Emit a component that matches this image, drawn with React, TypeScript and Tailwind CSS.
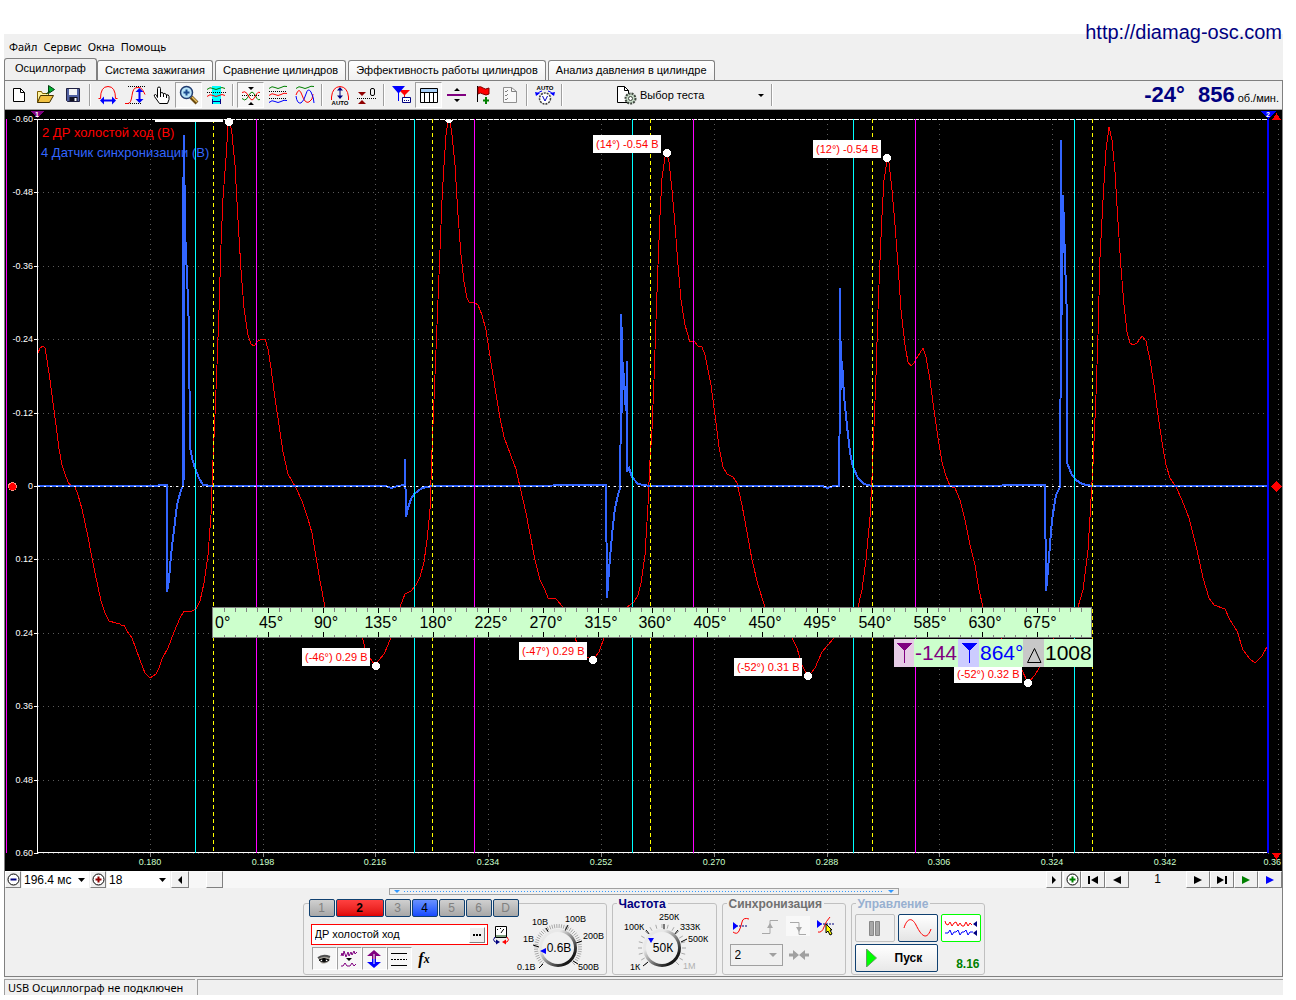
import type { ReactNode } from "react";
import { clsx } from "clsx";

type Point = [number, number];

const SANS = "font-['Liberation_Sans',sans-serif]";

const TABS = [
  "Осциллограф",
  "Система зажигания",
  "Сравнение цилиндров",
  "Эффективность работы цилиндров",
  "Анализ давления в цилиндре",
];

const GRID_Y: [number, string][] = [
  [119, "-0.60"],
  [192, "-0.48"],
  [266, "-0.36"],
  [339, "-0.24"],
  [413, "-0.12"],
  [486, "0"],
  [559, "0.12"],
  [633, "0.24"],
  [706, "0.36"],
  [780, "0.48"],
  [853, "0.60"],
];

const GRID_X: [number, string][] = [
  [150, "0.180"],
  [263, "0.198"],
  [375, "0.216"],
  [488, "0.234"],
  [601, "0.252"],
  [714, "0.270"],
  [827, "0.288"],
  [939, "0.306"],
  [1052, "0.324"],
  [1165, "0.342"],
];

const CYAN_LINES = [195, 414, 632, 853, 1074];
const MAGENTA_LINES = [256, 474, 693, 915];
const YELLOW_LINES = [213, 432, 650, 872, 1092];

const PRESSURE: Point[] = [
  [38, 353], [40, 348], [43, 346], [45, 348], [47, 360], [50, 380], [53, 403], [56, 425], [59, 449], [62, 465],
  [65, 474], [68, 482], [71, 486], [75, 487], [78, 495], [82, 509], [85, 523], [88, 537], [92, 558], [95, 573],
  [98, 587], [101, 601], [105, 613], [109, 621], [112, 621], [113, 623], [115, 622], [117, 624], [119, 623], [121, 625],
  [124, 625], [127, 631], [132, 638], [136, 649], [140, 660], [145, 673], [148, 676], [150, 678], [156, 674], [159, 668],
  [162, 659], [168, 648], [174, 632], [180, 618], [184, 611], [190, 612], [196, 609], [200, 601], [204, 583], [208, 555],
  [211, 515], [213, 460], [215, 415], [217, 365], [219, 310], [221, 245], [223, 198], [226, 158], [228, 126], [230, 122],
  [232, 134], [235, 165], [238, 220], [241, 270], [244, 308], [246, 322], [248, 335], [251, 344], [254, 346], [258, 341],
  [262, 339], [265, 339], [268, 349], [271, 368], [275, 398], [279, 425], [283, 452], [288, 474], [292, 481], [296, 488],
  [302, 501], [308, 519], [312, 533], [316, 557], [320, 581], [325, 607], [333, 626], [362, 636], [365, 648], [369, 657],
  [375, 665], [384, 654], [388, 645], [391, 637], [400, 607], [405, 594], [411, 591], [416, 585], [420, 577], [424, 562],
  [427, 540], [430, 510], [432, 450], [434, 400], [436, 350], [438, 300], [440, 250], [442, 200], [444, 165], [446, 135],
  [448, 122], [450, 121], [452, 135], [455, 165], [458, 215], [461, 255], [464, 282], [467, 298], [469, 302], [475, 303],
  [478, 305], [482, 315], [486, 330], [489, 350], [493, 375], [497, 400], [500, 418], [504, 437], [511, 456], [516, 469],
  [520, 487], [523, 500], [526, 513], [530, 534], [535, 560], [540, 580], [545, 590], [548, 598], [556, 599], [563, 607],
  [575, 638], [580, 650], [587, 657], [593, 660], [599, 652], [604, 638], [615, 612], [627, 607], [634, 602], [638, 595],
  [641, 583], [645, 555], [648, 505], [650, 460], [652, 430], [654, 380], [656, 320], [658, 265], [660, 215], [662, 178],
  [665, 157], [667, 154], [669, 162], [672, 190], [675, 225], [678, 265], [681, 300], [685, 325], [690, 342], [694, 341],
  [698, 346], [702, 347], [705, 355], [711, 385], [715, 415], [719, 447], [723, 467], [727, 474], [733, 477], [737, 483],
  [742, 505], [747, 532], [752, 560], [758, 585], [765, 607], [778, 630], [792, 638], [797, 648], [802, 665], [808, 677],
  [815, 668], [822, 652], [828, 645], [834, 638], [858, 607], [862, 590], [866, 560], [870, 517], [872, 477], [874, 427],
  [876, 375], [878, 310], [880, 260], [882, 215], [884, 180], [887, 161], [889, 163], [892, 190], [895, 225], [898, 265],
  [901, 310], [905, 345], [908, 362], [911, 366], [914, 363], [916, 359], [920, 353], [923, 348], [926, 357], [930, 380],
  [934, 410], [938, 438], [942, 462], [946, 476], [950, 486], [955, 488], [960, 500], [965, 520], [970, 545], [975, 565],
  [979, 590], [983, 607], [998, 634], [1015, 655], [1028, 683], [1035, 675], [1041, 665], [1060, 625], [1078, 607], [1083, 590],
  [1088, 550], [1090, 517], [1093, 465], [1096, 395], [1098, 335], [1100, 257], [1103, 200], [1106, 150], [1109, 127], [1112, 140],
  [1115, 172], [1118, 222], [1121, 268], [1124, 305], [1127, 332], [1130, 343], [1133, 345], [1137, 343], [1142, 336], [1146, 341],
  [1150, 360], [1154, 385], [1158, 415], [1162, 442], [1166, 465], [1170, 478], [1176, 487], [1182, 500], [1189, 518], [1197, 550],
  [1203, 578], [1209, 598], [1214, 605], [1225, 609], [1230, 620], [1237, 631], [1243, 650], [1250, 659], [1255, 663], [1262, 656],
  [1268, 645],
];

const SYNC: Point[] = [
  [38, 486], [80, 486], [150, 486], [167, 485], [167, 592], [169, 580], [171, 555], [174, 530], [177, 505], [181, 490],
  [183, 486], [183, 220], [184, 135], [184, 480], [184, 135], [185, 230], [188, 300], [189, 330], [190, 447], [192, 458],
  [195, 468], [199, 478], [203, 485], [213, 486], [260, 486], [385, 486], [392, 488], [397, 486], [405, 485], [405, 459],
  [406, 517], [408, 508], [411, 499], [414, 494], [422, 488], [432, 486], [500, 486], [606, 485], [607, 598], [609, 570],
  [612, 535], [615, 508], [618, 495], [620, 488], [621, 404], [621, 314], [622, 340], [622, 413], [623, 362], [624, 382],
  [625, 398], [626, 411], [627, 361], [627, 472], [629, 468], [632, 477], [638, 484], [650, 486], [730, 486], [822, 486],
  [828, 488], [833, 486], [839, 486], [840, 387], [840, 288], [841, 390], [842, 361], [844, 396], [847, 426], [850, 452],
  [853, 467], [858, 478], [864, 484], [872, 486], [960, 486], [1045, 485], [1046, 591], [1048, 570], [1052, 520], [1056, 495],
  [1060, 487], [1061, 315], [1061, 140], [1062, 315], [1063, 195], [1065, 260], [1067, 318], [1067, 463], [1072, 475], [1076, 480],
  [1082, 484], [1092, 486], [1160, 486], [1268, 486],
];

// label box (left, top), marker (x, y)
const EXTREMA: [string, number, number, number, number][] = [
  ["(14°) -0.54 В", 593, 135, 667, 153],
  ["(12°) -0.54 В", 813, 140, 887, 158],
  ["(-46°) 0.29 В", 302, 648, 376, 666],
  ["(-47°) 0.29 В", 519, 642, 593, 660],
  ["(-52°) 0.31 В", 734, 658, 808, 676],
  ["(-52°) 0.32 В", 954, 665, 1028, 683],
];

const RULER = { left: 213, step: 54.93, top: 607, bottom: 638 };

const toPath = (points: Point[]) => "M" + points.map(([x, y]) => `${x} ${y}`).join("L");

function Chart() {
  return (
    <svg viewBox="5 110 1277 761" className={clsx("block h-auto w-full bg-black", SANS)} shapeRendering="crispEdges">
      {/* grid */}
      <g stroke="#5a5a5a" strokeDasharray="1 4">
        {GRID_Y.map(([y]) => (
          <path key={y} d={`M38 ${y + 0.5}H1268`} />
        ))}
        {GRID_X.map(([x]) => (
          <path key={x} d={`M${x + 0.5} 124V853`} />
        ))}
        <path d="M1278.500 124V853" />
      </g>

      {/* axes */}
      <path d="M37.5 119V853M37 852.5H1268" stroke="#fff" fill="none" />
      <path d="M38 119.5H1268" stroke="#fff" strokeDasharray="5 1" />
      <path d="M1268 853.5H1282" stroke="#5a5a5a" strokeDasharray="1 4" />
      <g stroke="#fff">
        {GRID_Y.map(([y]) => (
          <path key={y} d={`M34 ${y + 0.5}H38`} />
        ))}
        {GRID_X.map(([x]) => (
          <path key={x} d={`M${x + 0.5} 853V857`} stroke="#888" />
        ))}
      </g>
      <g fill="#fff" fontSize="9" textAnchor="end">
        {GRID_Y.map(([y, label]) => (
          <text key={label} x="33" y={y + 3}>
            {label}
          </text>
        ))}
      </g>
      <g fill="#ccffcc" fontSize="9" textAnchor="middle">
        {GRID_X.map(([x, label]) => (
          <text key={label} x={x} y="865">
            {label}
          </text>
        ))}
        <text x="1281" y="865" textAnchor="end">
          0.36
        </text>
      </g>

      {/* signals */}
      <path d={toPath(PRESSURE)} stroke="#ff0000" fill="none" />
      <path d={toPath(SYNC)} stroke="#3366ff" strokeWidth="2" fill="none" />
      <path d="M38 486.5H1268" stroke="#fff" strokeDasharray="2 4" />

      <g fontSize="13">
        <text x="42" y="137" fill="#ff0000">
          2 ДР холостой ход (В)
        </text>
        <text x="41" y="157" fill="#3366ff">
          4 Датчик синхронизации (В)
        </text>
      </g>

      {/* phase lines */}
      {CYAN_LINES.map((x) => (
        <path key={x} d={`M${x + 0.5} 119V853`} stroke="#00ffff" />
      ))}
      {MAGENTA_LINES.map((x) => (
        <path key={x} d={`M${x + 0.5} 119V853`} stroke="#ff00ff" />
      ))}
      {YELLOW_LINES.map((x) => (
        <path key={x} d={`M${x + 0.5} 119V853`} stroke="#ffff00" strokeDasharray="4 3" />
      ))}
      <path d="M6.5 119V853" stroke="#ff00ff" />
      <path d="M1268 119V853" stroke="#0000ff" strokeWidth="2" />

      {/* cursors and channel handles */}
      <path d="M30 111H44L37 118Z" fill="#800080" />
      <path d="M1261 111H1276L1268 119Z" fill="#0000ff" />
      <g fill="#fff" fontSize="7" fontWeight="bold" textAnchor="middle">
        <text x="37" y="117">
          1
        </text>
        <text x="1268" y="117">
          2
        </text>
      </g>
      <path d="M1272 120L1276.500 113L1281 120ZM1272 853H1281L1276.500 860ZM1271 486.500L1276.500 481L1282 486.500L1276.500 492Z" fill="#ff0000" />
      <circle cx="12.500" cy="486.500" r="4" fill="#ff0000" stroke="#ff9080" />

      {/* extrema */}
      <rect x="155" y="119" width="68" height="3" fill="#fff" />
      <circle cx="229" cy="122" r="4" fill="#fff" />
      <path d="M445 120h8l-2 3h-4z" fill="#fff" />
      {EXTREMA.map(([label, left, top, x, y]) => (
        <g key={left}>
          <rect x={left} y={top} width="68" height="18" fill="#fff" />
          <text x={left + 3} y={top + 13} fontSize="11" fill="#ff0000">
            {label}
          </text>
          <circle cx={x} cy={y} r="4" fill="#fff" />
        </g>
      ))}

      {/* degree ruler */}
      <rect x="212.500" y="607.500" width="879" height="30" fill="#ccffcc" stroke="#808080" />
      {Array.from({ length: 80 }, (_, i) => {
        const x = Math.round(RULER.left + (i * RULER.step) / 5) + 0.5;
        const major = i % 5 === 0;
        if (i === 0) return null;
        return (
          <path
            key={i}
            d={major ? `M${x} 608v5M${x} 632v5` : `M${x} 608v4M${x} 635v2`}
            stroke={major ? "#000" : "#808080"}
          />
        );
      })}
      <g fontSize="16" fill="#000">
        <text x="215" y="628">
          0°
        </text>
        {Array.from({ length: 15 }, (_, i) => (
          <text key={i} x={Math.round(RULER.left + (i + 1) * RULER.step) + 3} y="628" textAnchor="middle">
            {(i + 1) * 45}°
          </text>
        ))}
      </g>

      {/* cursor angles */}
      <rect x="894" y="639" width="199" height="28" fill="#ccffcc" />
      <rect x="894" y="639" width="20" height="28" fill="#e6cce6" />
      <rect x="958" y="639" width="21" height="28" fill="#ccccff" />
      <rect x="1023" y="639" width="21" height="28" fill="#c8c8c8" />
      <path d="M896 643H912L905 650V663H904V650Z" fill="#800080" />
      <path d="M961 643H977L970 650V663H969V650Z" fill="#0000ff" />
      <path d="M1034.500 648.500L1041 662.500H1027.500Z" fill="none" stroke="#000" shapeRendering="auto" />
      <g fontSize="21">
        <text x="915" y="660" fill="#800080">
          -144
        </text>
        <text x="980" y="660" fill="#0000ff">
          864°
        </text>
        <text x="1045" y="660" fill="#000">
          1008
        </text>
      </g>
    </svg>
  );
}

function Icon({ children, w = 22, h = 22 }: { children: ReactNode; w?: number; h?: number }) {
  return (
    <svg width={w} height={h} viewBox={`0 0 ${w} ${h}`} fill="none" className="shrink-0">
      {children}
    </svg>
  );
}

function ToolButton({ label, pressed, children }: { label: string; pressed?: boolean; children: ReactNode }) {
  return (
    <button
      type="button"
      aria-label={label}
      className={clsx(
        "flex h-[26px] w-[27px] items-center justify-center border",
        pressed ? "border-t-[#a0a0a0] border-r-white border-b-white border-l-[#a0a0a0] bg-[#f7f7f7]" : "border-transparent"
      )}
    >
      <Icon>{children}</Icon>
    </button>
  );
}

function Separator() {
  return (
    <div className="flex w-2 justify-center">
      <div className="h-[22px] w-0.5 border-r border-l border-r-white border-l-[#a0a0a0]" />
    </div>
  );
}

function Toolbar() {
  return (
    <div className="flex h-[29px] items-center border-b border-[#a0a0a0]">
      <ToolButton label="Новый">
        <path d="M5.500 4.500h7l4 4v9h-11z" fill="#fff" stroke="#000" />
        <path d="M12.500 4.500v4h4" stroke="#000" />
      </ToolButton>
      <ToolButton label="Открыть">
        <path d="M2.500 18.500v-11h4l1 2h6v3" fill="#fff4a0" stroke="#806000" />
        <path d="M2.500 18.500l3-7h13l-4 7z" fill="#f0c040" stroke="#403000" />
        <path d="M13.500 1.500l6 4-6 4z" fill="#00b030" stroke="#004010" />
        <path d="M11 10l4-3" stroke="#004010" />
      </ToolButton>
      <ToolButton label="Сохранить">
        <path d="M4.500 4.500h13v13h-12l-1-1z" fill="#5060a0" stroke="#202040" />
        <path d="M7 5h8v6H7z" fill="#f4f4f4" />
        <path d="M7.500 13h8v4h-8z" fill="#101020" />
        <path d="M12.500 14h2v3h-2z" fill="#fff" />
      </ToolButton>
      <Separator />
      <ToolButton label="Горизонтальный масштаб">
        <path d="M1.500 14.500h2q0-12 7.500-12t7.500 12h2" stroke="#ff0000" />
        <path d="M6 16.500h10" stroke="#0000ff" strokeWidth="2" />
        <path d="M3 16.500l4-4v8zM19 16.500l-4-4v8z" fill="#0000ff" />
      </ToolButton>
      <ToolButton label="Вертикальный масштаб">
        <path d="M4 2.500h17M2 19.500h15" stroke="#000" strokeDasharray="1 1" />
        <path d="M1 19.500h3q3 0 4-8t5-8q4-1 6 3l2 4" stroke="#ff0000" />
        <path d="M15.500 6v11" stroke="#0000ff" strokeWidth="2" />
        <path d="M15.500 4l4 4h-8zM15.500 19l4-4h-8z" fill="#0000ff" />
      </ToolButton>
      <ToolButton label="Рука">
        <path
          d="M6.500 13.500v-9q0-1.500 1.500-1.500t1.500 1.500v5q.5-1 1.500-1t1.500 1.500q.5-1 1.500-.5t1.500 1.500q2-1 2.500 1.500v3l-1.500 4h-8l-5-7q-1-2 1-2 1 0 2 3z"
          fill="#fff"
          stroke="#000"
        />
        <path d="M9.500 9v4M12.500 10v3M15.500 11v3" stroke="#000" />
      </ToolButton>
      <ToolButton label="Лупа" pressed>
        <path d="M13 13l6 6" stroke="#6a4a10" strokeWidth="4" />
        <path d="M14 13l5 5" stroke="#e8c060" strokeWidth="1.500" />
        <circle cx="8.500" cy="8.500" r="6" fill="#b8e4f8" stroke="#203c70" strokeWidth="1.500" />
        <path d="M8.500 5.500v6M5.500 8.500h6" stroke="#1c4c90" strokeWidth="2" />
      </ToolButton>
      <ToolButton label="Фрагмент">
        <path d="M7 2h9v18H7z" fill="#00ffff" />
        <path d="M2 5.500q3-3 6-1t6 0 6 0" stroke="#008000" />
        <path d="M2 8.500h19" stroke="#000" strokeDasharray="1 1" />
        <path d="M2 12.500q3-3 6-1t6 0 6 0" stroke="#ff0000" />
        <path d="M7.500 15v5M15.500 15v5M8 17.500h8" stroke="#000080" />
      </ToolButton>
      <Separator />
      <ToolButton label="Совместить сигналы" pressed>
        <path d="M2 11.500h18" stroke="#000" strokeDasharray="1 1" />
        <path d="M2 14.500q3 3 5 0l3-5q2-3 4 0l3 5q1 2 3 1" stroke="#008000" />
        <path d="M2 8.500q3-2 5 1l3 5q2 3 4 0l3-5q1-2 3-1" stroke="#ff0000" />
        <path d="M8 3h6l-3 3zM8 21h6l-3-3z" fill="#000" />
      </ToolButton>
      <ToolButton label="Разнести сигналы">
        <path d="M2 4.500q3-3 6-1t6 0 6-1" stroke="#008000" />
        <path d="M2 11.500q3-3 6-1t6 0 6-1" stroke="#ff0000" />
        <path d="M2 18.500q3-3 6-1t6 0 6-1" stroke="#0000ff" />
        <path d="M2 7.500h18M2 14.500h18" stroke="#000" strokeDasharray="1 1" />
      </ToolButton>
      <ToolButton label="Наложить сигналы">
        <path d="M2 4.500q3-3 6-1t6 0 6-1" stroke="#008000" />
        <path d="M2 11q3-9 6 0t7 7q4-2 4-8" stroke="#ff0000" />
        <path d="M2 12q1 8 5 7 3-2 5-9t5-2q3 6 3 11" stroke="#0000ff" />
      </ToolButton>
      <Separator />
      <ToolButton label="Автомасштаб">
        <path d="M2.500 16v-3q1-10 8.500-10.500 7.500.5 8.500 10.500v3" stroke="#ff0000" />
        <path d="M11 5v9" stroke="#000080" />
        <path d="M11 3l3 3.500H8zM11 15l3-3.500H8z" fill="#000080" />
        <text x="11" y="21" fontSize="6" fontWeight="bold" fill="#000" textAnchor="middle">
          AUTO
        </text>
      </ToolButton>
      <ToolButton label="Обнулить">
        <path d="M2 8h8l-4 4zM2 20h8l-4-4z" fill="#900000" />
        <path d="M1 14.500h20" stroke="#000" strokeDasharray="1 1" />
        <rect x="14.500" y="4.500" width="4" height="7" rx="1.500" stroke="#000" />
      </ToolButton>
      <Separator />
      <ToolButton label="Фильтр">
        <path d="M8 6h11l-5 5v6h-1v-6z" fill="#ff0000" />
        <path d="M1 2h13L8 9v8H7V9z" fill="#0000ff" />
        <path d="M11.500 13.500h8v5h-8z" fill="#fff" stroke="#000080" />
        <path d="M13 16.500h1M15 16.500h1M17 16.500h1" stroke="#000080" />
      </ToolButton>
      <ToolButton label="Таблица" pressed>
        <path d="M2.500 4.500h17v14h-17z" fill="#fff" stroke="#000" />
        <path d="M3 5h16v3H3z" fill="#a8d0f8" />
        <path d="M3 8.500h16M6.500 9v9M11.500 9v9M15.500 9v9" stroke="#000" />
      </ToolButton>
      <ToolButton label="Линия">
        <path d="M2 11h19" stroke="#800080" strokeWidth="2" />
        <path d="M9 7h6l-3-3zM9 15h6l-3 3z" fill="#000" />
      </ToolButton>
      <ToolButton label="Добавить флаг">
        <path d="M5.500 2v16" stroke="#000" />
        <path d="M6 3q3-1 5 1t6 0v6q-3 2-6 0t-5 0z" fill="#ff0000" stroke="#800000" />
        <path d="M14 13v7M11 16.500h6" stroke="#008000" strokeWidth="2" />
      </ToolButton>
      <ToolButton label="Отчёт">
        <path d="M4.500 3.500h8l5 4v11h-13z" fill="#f8f8f8" stroke="#909090" />
        <path d="M12.500 3.500v4h5M6 7l1 1 2-2M6 11l1 1 2-2M6 15l1 1 2-2" stroke="#808080" />
      </ToolButton>
      <Separator />
      <ToolButton label="Автонастройка">
        <text x="11" y="6" fontSize="6" fontWeight="bold" fill="#000" textAnchor="middle">
          AUTO
        </text>
        <path d="M3 11q2-4 5-4M19 11q-2-4-5-4" stroke="#0000ff" />
        <path d="M1 8l5 1-4 3zM21 8l-5 1 4 3z" fill="#0000ff" />
        <circle cx="11" cy="14.500" r="5.500" fill="#fff" stroke="#404040" strokeWidth="1.500" strokeDasharray="2 1" />
        <path d="M8.500 12l2.500 5 2.500-5" stroke="#0000c0" />
      </ToolButton>
      <Separator />
      <div className="ml-[50px] flex items-center">
        <Icon w={22} h={22}>
          <path d="M1.500 2.500h7l4 4v12h-11z" fill="#fff" stroke="#000" />
          <path d="M8.500 2.500v4h4" stroke="#000" />
          <circle cx="14.500" cy="14.500" r="5" fill="#c8dcc8" stroke="#404840" strokeWidth="2" strokeDasharray="2 1" />
          <circle cx="14.500" cy="14.500" r="2" fill="#fff" stroke="#404840" />
        </Icon>
        <div className="relative">
          <select aria-label="Выбор теста" className="h-5 w-[130px] appearance-none bg-transparent px-0.5 text-[11px]">
            <option>Выбор теста</option>
          </select>
          <svg width="6" height="3" className="pointer-events-none absolute top-[9px] right-1">
            <path d="M0 0h6L3 3z" />
          </svg>
        </div>
      </div>
      <Separator />
      <div className="ml-auto flex items-baseline gap-[3px] pr-[3px]">
        <span className="mr-2.5 text-[22px] leading-6 font-bold text-[#000080]">-24°</span>
        <span className="text-[22px] leading-6 font-bold text-[#000080]">856</span>
        <span className="text-[11px]">об./мин.</span>
      </div>
    </div>
  );
}

function NavButton({ label, className, children }: { label: string; className?: string; children: ReactNode }) {
  return (
    <button
      type="button"
      aria-label={label}
      className={clsx(
        "flex h-[17px] items-center justify-center border border-t-white border-r-[#808080] border-b-[#808080] border-l-white bg-[#f0f0f0]",
        className
      )}
    >
      {children}
    </button>
  );
}

function DropValue({ label, value, className }: { label: string; value: string; className: string }) {
  return (
    <div className={clsx("relative mx-px bg-white", className)}>
      <select aria-label={label} className="h-[17px] w-full appearance-none bg-transparent px-0.5 text-xs leading-4">
        <option>{value}</option>
      </select>
      <svg width="7" height="4" className="pointer-events-none absolute top-[7px] right-1">
        <path d="M0 0h7L3.500 4z" />
      </svg>
    </div>
  );
}

function ScrollRow() {
  return (
    <div className="flex h-[17px] items-stretch">
      <NavButton label="Уменьшить" className="w-4">
        <Icon w={13} h={13}>
          <circle cx="6.500" cy="6.500" r="5.500" fill="#fff" stroke="#000" />
          <path d="M3.500 6.500h6" stroke="#000080" strokeWidth="2" />
        </Icon>
      </NavButton>
      <DropValue label="Развёртка" value="196.4 мс" className="w-[67px]" />
      <NavButton label="Увеличить" className="w-4">
        <Icon w={13} h={13}>
          <circle cx="6.500" cy="6.500" r="5.500" fill="#fff" stroke="#000" />
          <path d="M3.500 6.500h6M6.500 3.500v6" stroke="#900000" strokeWidth="2" />
        </Icon>
      </NavButton>
      <DropValue label="Деление" value="18" className="w-[63px]" />
      <NavButton label="Прокрутить влево" className="w-[18px]">
        <svg width="4" height="8">
          <path d="M4 0v8L0 4z" />
        </svg>
      </NavButton>
      <div className="flex-1 bg-[#f7f7f7] pl-[17px]">
        <div className="h-[17px] w-[17px] border border-t-white border-r-[#808080] border-b-[#808080] border-l-white bg-[#f0f0f0]" />
      </div>
      <NavButton label="Прокрутить вправо" className="w-4">
        <svg width="4" height="8">
          <path d="M0 0v8L4 4z" />
        </svg>
      </NavButton>
      <NavButton label="Добавить кадр" className="ml-px w-[18px]">
        <Icon w={13} h={13}>
          <circle cx="6.500" cy="6.500" r="5.500" fill="#fff" stroke="#000" />
          <path d="M3.500 6.500h6M6.500 3.500v6" stroke="#008000" strokeWidth="2" />
        </Icon>
      </NavButton>
      <NavButton label="Первый кадр" className="w-6">
        <svg width="11" height="8">
          <path d="M0 0h2v8H0zM10 0v8L3 4z" />
        </svg>
      </NavButton>
      <NavButton label="Предыдущий кадр" className="w-6">
        <svg width="8" height="8">
          <path d="M8 0v8L0 4z" />
        </svg>
      </NavButton>
      <div className="w-[57px] text-center text-xs leading-[17px]">1</div>
      <NavButton label="Следующий кадр" className="w-6">
        <svg width="8" height="8">
          <path d="M0 0v8l8-4z" />
        </svg>
      </NavButton>
      <NavButton label="Последний кадр" className="w-6">
        <svg width="11" height="8">
          <path d="M0 0v8l7-4zM8 0h2v8H8z" />
        </svg>
      </NavButton>
      <NavButton label="Воспроизвести" className="w-6">
        <svg width="8" height="8" fill="#008000">
          <path d="M0 0v8l8-4z" />
        </svg>
      </NavButton>
      <NavButton label="Воспроизвести всё" className="w-6">
        <svg width="8" height="8" fill="#0000ff">
          <path d="M0 0v8l8-4z" />
        </svg>
      </NavButton>
    </div>
  );
}

function Group({ title, titleClass, className, children }: { title?: string; titleClass?: string; className?: string; children: ReactNode }) {
  return (
    <section className={clsx("relative h-[72px] rounded-[3px] border border-[#c0c0c0]", className)}>
      {title && (
        <h2 className={clsx("absolute -top-[7px] left-1 bg-[#f0f0f0] px-0.5 text-xs leading-[14px] font-bold", titleClass)}>{title}</h2>
      )}
      {children}
    </section>
  );
}

const CHANNELS: { name: string; style: string }[] = [
  { name: "1", style: "w-[26px] bg-linear-to-b from-[#d0d0d0] to-[#a8a8a8] text-[#808080]" },
  { name: "2", style: "w-12 bg-linear-to-b from-[#ff4040] to-[#e00000] font-bold text-black" },
  { name: "3", style: "w-[26px] bg-linear-to-b from-[#d0d0d0] to-[#a8a8a8] text-[#808080]" },
  { name: "4", style: "w-[26px] bg-linear-to-b from-[#6890ff] to-[#1848ff] text-black" },
  { name: "5", style: "w-[26px] bg-linear-to-b from-[#d0d0d0] to-[#a8a8a8] text-[#808080]" },
  { name: "6", style: "w-[26px] bg-linear-to-b from-[#d0d0d0] to-[#a8a8a8] text-[#808080]" },
  { name: "D", style: "w-[26px] bg-linear-to-b from-[#d0d0d0] to-[#a8a8a8] text-[#808080]" },
];

function ticks(cx: number, cy: number, r1: number, r2: number, step: number) {
  let d = "";
  for (let a = 135; a <= 405; a += step) {
    const rad = (a * Math.PI) / 180;
    d += `M${cx + r1 * Math.cos(rad)} ${cy + r1 * Math.sin(rad)}L${cx + r2 * Math.cos(rad)} ${cy + r2 * Math.sin(rad)}`;
  }
  return d;
}

type KnobProps = {
  id: string;
  value: string;
  cx: number;
  cy: number;
  step: number;
  marks: string;
  pointer: string;
  labels: [string, number, number, string?][];
};

function Knob({ id, value, cx, cy, step, marks, pointer, labels }: KnobProps) {
  return (
    <svg width="91" height="64" viewBox="0 0 91 64" className="shrink-0 overflow-visible">
      <defs>
        <linearGradient id={id} x1="0" y1="0" x2="1" y2="1">
          <stop offset="0.3" stopColor="#e8e8e8" />
          <stop offset="0.8" stopColor="#181818" />
        </linearGradient>
      </defs>
      <path d={ticks(cx, cy, 20, 24, step)} stroke="#a8a8a8" />
      <path d={marks} stroke="#000" />
      <circle cx={cx} cy={cy} r="19" fill={`url(#${id})`} />
      <circle cx={cx} cy={cy} r="16" fill="#f0f0f0" />
      <path d={pointer} fill="#0000ff" />
      <text x={cx + 1} y={cy + 4} fontSize="12" textAnchor="middle">
        {value}
      </text>
      <g fontSize="9">
        {labels.map(([text, x, y, fill]) => (
          <text key={text} x={x} y={y} fill={fill ?? "#000"}>
            {text}
          </text>
        ))}
      </g>
    </svg>
  );
}

function ChannelGroup() {
  const toggle = "flex h-[23px] w-[25px] items-center justify-center border";
  const on = "border-t-[#a0a0a0] border-r-white border-b-white border-l-[#a0a0a0] bg-[#f7f7f7]";
  return (
    <Group className="w-[304px]">
      <div className="flex">
        <div className="-mt-[5px] ml-[5px] w-[207px]">
          <div className="flex gap-px bg-[#f0f0f0]">
            {CHANNELS.map(({ name, style }) => (
              <button
                key={name}
                type="button"
                className={clsx("h-[18px] shrink-0 rounded-[2px] border border-[#104070] text-xs leading-[14px]", style)}
              >
                {name}
              </button>
            ))}
          </div>
          <div className="mt-[7px] ml-0.5 flex items-center gap-1">
            <div className="flex h-[21px] w-[177px] items-center border border-[#ff0000] bg-white pr-0.5 pl-[3px]">
              <input aria-label="Название канала" defaultValue="ДР холостой ход" className="min-w-0 flex-1 bg-transparent text-[11px] outline-none" />
              <button
                type="button"
                aria-label="Выбрать"
                className="flex h-4 w-4 items-center justify-center border border-t-white border-r-[#808080] border-b-[#808080] border-l-white bg-[#f0f0f0]"
              >
                <svg width="8" height="2">
                  <path d="M0 0h2v2H0zM3 0h2v2H3zM6 0h2v2H6z" />
                </svg>
              </button>
            </div>
            <button type="button" aria-label="Подключение">
              <Icon w={18} h={20}>
                <path d="M3.500 1.500h11v11h-11z" fill="#fff" stroke="#000" />
                <path d="M4 10h10v2H4z" fill="#80a080" />
                <path d="M5 5l1-1M8 3.500h1M12 5l-1-1M9 8l2-3" stroke="#000" />
                <path d="M3 12q-3 3 0 5h2" stroke="#000080" />
                <path d="M4 14.500l4 2.500-4 2.500z" fill="#000080" />
                <path d="M15 12q3 3 0 5h-2" stroke="#ff0000" />
                <path d="M14 14.500L10 17l4 2.500z" fill="#ff0000" />
              </Icon>
            </button>
          </div>
          <div className="mt-0.5 ml-[3px] flex">
            <button type="button" aria-label="Показать" className={clsx(toggle, on)}>
              <Icon w={14} h={14}>
                <path d="M1 6q5-4 11-1l1 3q-4 5-9 3z" fill="#a09c94" />
                <path d="M1 6q5-4 12-1" stroke="#505050" strokeWidth="2" />
                <path d="M2 8q5-3 10 0-5 4-10 0z" fill="#fff" stroke="#000" />
                <circle cx="7" cy="8" r="2" fill="#000" />
              </Icon>
            </button>
            <button type="button" aria-label="Сглаживание" className={clsx(toggle, on)}>
              <Icon w={18} h={18}>
                <path d="M1 6l1-3 1 3 1-5 2 6 2-5 1 4 2-4 1 3 2-4 1 3 2-2" stroke="#800080" />
                <path d="M6 8h6l-3 3z" fill="#000" />
                <path d="M1 16h2l2-3 2 3h3l2-3 2 3 2-2" stroke="#800080" />
              </Icon>
            </button>
            <button type="button" aria-label="Инверсия" className={clsx(toggle, on)}>
              <Icon w={14} h={18}>
                <path d="M7 0l7 6H9v3H5V6H0z" fill="#800080" />
                <path d="M7 18l7-6H9V9H5v3H0z" fill="#0000ff" />
                <path d="M7 4v10" stroke="#fff" />
              </Icon>
            </button>
            <button type="button" aria-label="Уровни" className={clsx(toggle, on)}>
              <Icon w={18} h={14}>
                <path d="M1 1.500h16M1 13.500h16" stroke="#000" />
                <path d="M1 7.500h16" stroke="#000" strokeDasharray="2 1" />
              </Icon>
            </button>
            <button type="button" aria-label="Функция" className={clsx(toggle, "border-transparent font-['Liberation_Serif',serif] text-base leading-4 font-bold italic")}>
              f<span className="text-xs">x</span>
            </button>
          </div>
        </div>
        <div className="mt-[7px]">
          <Knob
            id="volts"
            value="0.6В"
            cx={42}
            cy={37}
            step={6}
            marks="M23 57l4-4M17 34l6 2M30 17l3 5M52 14l-3 6M66 30l-6 2M62 53l-5-3"
            pointer="M24 40l6-3v6z"
            labels={[
              ["0.1В", 1, 59],
              ["1В", 7, 31],
              ["10В", 16, 14],
              ["100В", 49, 11],
              ["200В", 67, 28],
              ["500В", 62, 59],
            ]}
          />
        </div>
      </div>
    </Group>
  );
}

function SyncGroup() {
  return (
    <Group title="Синхронизация" titleClass="text-[#707070]" className="w-[124px]">
      <div className="mt-3 ml-[7px] flex gap-1">
        <button type="button" aria-label="Синхронизация по уровню">
          <Icon w={24} h={20}>
            <path d="M3 16q4 3 6-1t3-9 7-3" stroke="#ff0000" />
            <path d="M3 10h15" stroke="#000080" strokeDasharray="2 1" />
            <path d="M3 6v8l5-4z" fill="#0000ff" />
          </Icon>
        </button>
        <button type="button" aria-label="Фронт">
          <Icon w={24} h={20}>
            <path d="M4 17.500h8v-13h8" stroke="#a8a8a8" />
            <path d="M12 7l3 5H9z" fill="#a8a8a8" />
          </Icon>
        </button>
        <button type="button" aria-label="Спад" className="bg-[#f8f8f8]">
          <Icon w={24} h={20}>
            <path d="M4 6.500h9v12h7" stroke="#a8a8a8" />
            <path d="M13 16l3-5h-6z" fill="#a8a8a8" />
          </Icon>
        </button>
        <button type="button" aria-label="Установить уровень">
          <Icon w={24} h={20}>
            <path d="M4 16q4 1 6-5t6-10" stroke="#ff0000" />
            <path d="M3 8h17" stroke="#000080" strokeDasharray="2 1" />
            <path d="M3 4v8l5-4z" fill="#0000ff" />
            <path d="M12 8l6 6h-2l2 4-2 1-2-4-2 2z" fill="#ffff00" stroke="#000" />
          </Icon>
        </button>
      </div>
      <div className="mt-2 ml-[7px] flex items-center gap-1.5">
        <div className="relative">
          <select aria-label="Канал синхронизации" className="h-[22px] w-[53px] appearance-none border border-[#a0a0a0] bg-transparent px-1 text-xs">
            <option>2</option>
          </select>
          <svg width="8" height="4" className="pointer-events-none absolute top-[9px] right-1.5">
            <path d="M0 0h8L4 4z" fill="#a0a0a0" />
          </svg>
        </div>
        <Icon w={20} h={10}>
          <path d="M0 5h5M20 5h-5" stroke="#a0a0a0" strokeWidth="3" />
          <path d="M4 0l6 5-6 5zM16 0l-6 5 6 5z" fill="#a0a0a0" />
        </Icon>
      </div>
    </Group>
  );
}

function ControlGroup() {
  return (
    <Group title="Управление" titleClass="text-[#98b0d0]" className="w-[134px]">
      <div className="mt-2.5 ml-[3px] flex gap-[3px]">
        <button type="button" aria-label="Пауза" className="flex h-7 w-10 items-center justify-center rounded-[2px] border border-[#c0c0c0]">
          <svg width="12" height="15">
            <path d="M.5.5h4v14h-4zM6.500.5h4v14h-4z" fill="#a8a8a8" stroke="#888" />
          </svg>
        </button>
        <button type="button" aria-label="Осциллограмма" className="flex h-7 w-10 items-center justify-center rounded-[2px] border border-[#104070] bg-linear-to-b from-white to-[#e4e4e4]">
          <svg width="30" height="20" fill="none" stroke="#ff0000">
            <path d="M1 10C4 0 9-1 13 7s10 18 15 4" />
          </svg>
        </button>
        <button type="button" aria-label="Запись" className="flex h-7 w-10 items-center justify-center rounded-[2px] border border-[#00ff00] bg-white">
          <svg width="34" height="20" fill="none">
            <path d="M1 3l1 3 2 1 2-3 2 4 2-3 2-1 2 4 2-3 2 3h2l2-4 2 4 2-3 2 2" stroke="#ff0000" />
            <path d="M1 15h3l2-3 2 5 2-3h2l2-2 2 5 2-3h2l2-2 2 5 2-3h3" stroke="#0000ff" />
            <path d="M33 3v6l-4-3zM33 12v6l-4-3z" fill="#000080" />
          </svg>
        </button>
      </div>
      <div className="mt-0.5 ml-[3px] flex items-end justify-between pr-1">
        <button type="button" className="flex h-7 w-[83px] items-center gap-[18px] rounded-[2px] border border-[#104070] bg-linear-to-b from-white to-[#e8e8e8] pl-2.5 text-xs font-bold">
          <svg width="11" height="18">
            <path d="M.5 0v18l10-9z" fill="#00ff00" stroke="#60a060" />
          </svg>
          Пуск
        </button>
        <span className="text-xs leading-[15px] font-bold text-[#008000]">8.16</span>
      </div>
    </Group>
  );
}

export default function App() {
  return (
    <div className={clsx("bg-white pt-[34px] pr-[13px] pb-[5px] pl-1 text-[11px] text-black", SANS)}>
      <div className="relative bg-[#f0f0f0]">
        <a href="http://diamag-osc.com" className="absolute -top-[14px] right-px text-xl leading-6 text-[#000080]">
          http://diamag-osc.com
        </a>

        <nav className="flex h-6 items-center gap-1.5 pt-0.5 pl-[5px] font-['Noto_Sans',sans-serif]">
          {["Файл", "Сервис", "Окна", "Помощь"].map((item) => (
            <button key={item} type="button">
              {item}
            </button>
          ))}
        </nav>

        <div role="tablist" className="flex h-[22px] items-end gap-0.5">
          {TABS.map((tab, i) => (
            <button
              key={tab}
              type="button"
              role="tab"
              aria-selected={i === 0}
              className={clsx(
                "rounded-t-[3px] border border-b-0 border-[#808080]",
                i === 0 ? "-mr-0.5 h-[22px] px-2.5 pb-0.5" : "h-5 bg-linear-to-b from-white to-[#f0f0f0] px-[7px]"
              )}
            >
              {tab}
            </button>
          ))}
        </div>

        <main className="border border-[#808080]">
          <Toolbar />
          <Chart />
          <ScrollRow />

          <div className="flex justify-center">
            <div className="flex h-[7px] w-[510px] items-center gap-1 border border-[#a0a0a0] px-1">
              <svg width="6" height="3" fill="#3399ff">
                <path d="M0 0h6L3 3z" />
              </svg>
              <svg height="1" className="min-w-0 flex-1">
                <path d="M0 .5h2000" stroke="#3399ff" strokeDasharray="1 2" />
              </svg>
              <svg width="6" height="3" fill="#3399ff">
                <path d="M0 0h6L3 3z" />
              </svg>
            </div>
          </div>

          <div className="mt-2 mb-px flex justify-center gap-[5px]">
            <ChannelGroup />
            <Group title="Частота" titleClass="text-[#000080]" className="w-[105px]">
              <div className="mt-2 ml-2">
                <Knob
                  id="rate"
                  value="50К"
                  cx={41}
                  cy={36}
                  step={15}
                  marks="M22 54l5-4M25 18l4 5M43 12v6M57 18l-4 5M66 27l-6 3"
                  pointer="M27 26l6 0-3 5z"
                  labels={[
                    ["1К", 9, 58],
                    ["100К", 3, 18],
                    ["250К", 38, 8],
                    ["333К", 59, 18],
                    ["500К", 67, 30],
                    ["1М", 62, 57, "#b0b0b0"],
                  ]}
                />
              </div>
            </Group>
            <SyncGroup />
            <ControlGroup />
          </div>
        </main>

        <footer className="mt-0.5 flex h-4 gap-0.5 font-['Noto_Sans',sans-serif] leading-[15px]">
          <div className="w-[191px] border-t border-l border-[#a0a0a0] pl-[3px]">USB Осциллограф не подключен</div>
          <div className="flex-1 border-t border-l border-[#a0a0a0]" />
        </footer>
      </div>
    </div>
  );
}
